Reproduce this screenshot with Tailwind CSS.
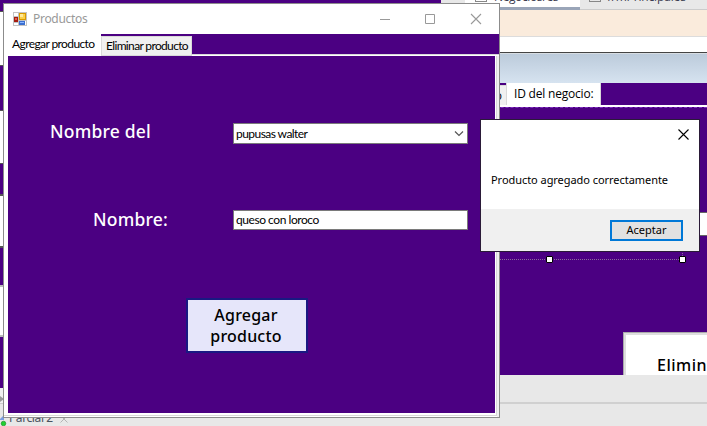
<!DOCTYPE html>
<html lang="es">
<head>
<meta charset="utf-8">
<title>Productos</title>
<script src="https://cdn.jsdelivr.net/npm/@tailwindcss/browser@4"></script>
</head>
<body class="relative h-[426px] w-[707px] overflow-hidden bg-[#e8e8e8] font-['Noto_Sans',sans-serif] text-black">

<!-- Form behind, left edge -->
<div class="absolute left-0 top-0 flex h-[426px] w-[4px] flex-col">
  <div class="h-[11px] bg-[#4b0082]"></div>
  <div class="h-[55px] border-y border-[#555] bg-white"></div>
  <div class="h-[44px] bg-[#4b0082]"></div>
  <div class="h-[54px] border-y border-[#555] bg-white"></div>
  <div class="h-[30px] bg-[#4b0082]"></div>
  <div class="h-[54px] border-y-2 border-[#555] bg-white"></div>
  <div class="h-[37px] bg-[#4b0082]"></div>
  <div class="h-[52px] border-y-2 border-[#bbb] bg-white"></div>
  <div class="h-[51px] bg-[#4b0082]"></div>
  <div class="h-[15px] bg-[#f0f0f0] pt-[8px]"><svg class="block" width="4" height="6"><path d="M0 0L4 3L0 6z" fill="#999"/></svg></div>
  <div class="flex-1 border-t border-[#ccc] bg-[#e8e8e8]"></div>
</div>
<div class="absolute left-0 top-0 h-[4px] w-[442px] bg-[#4b0082]"></div>

<!-- Editor area -->
<div class="absolute left-[441px] top-0 flex h-[375px] w-[266px] flex-col bg-[#4b0082]">
  <div class="flex h-[10px] shrink-0 bg-[#e8e8e8] font-['Open_Sans',sans-serif] text-[12px] leading-[14px] text-[#3c3c50]">
    <div class="w-[24px] shrink-0"></div>
    <div class="flex w-[115px] shrink-0 overflow-hidden border-b-3 border-[#9aa5b8] bg-white pl-[10px]">
      <span class="h-[2px] w-[12px] border border-t-0 border-[#888]"></span>
      <span class="-mt-[10px] ml-[7px] tracking-[-0.4px]">Negociosres</span>
    </div>
    <div class="flex flex-1 overflow-hidden border-b border-[#ccc] pl-[9px]">
      <span class="h-[2px] w-[12px] shrink-0 border border-t-0 border-[#888]"></span>
      <span class="-mt-[10px] ml-[6px] whitespace-nowrap tracking-[-0.15px]">frmPrincipales</span>
    </div>
  </div>
  <div class="h-[27px] shrink-0 border-b border-[#dcdcdc] bg-[#faebdc]"></div>
  <div class="h-[16px] shrink-0 border-b border-[#444] bg-white"></div>
  <div class="h-[30px] shrink-0 border-t border-[#d7dde3] bg-linear-to-b from-[#bccbdb] to-[#d6e3f0]"></div>
  <div class="flex h-[24px] shrink-0 items-end border-b-2 border-white font-['Open_Sans',sans-serif] text-[12px]">
    <div class="flex h-[20px] w-[65px] items-center justify-end border-t border-[#d9d9d9] bg-[#f0f0f0] pr-[4px]"><span>o</span></div>
    <div class="h-[22px] w-[95px] whitespace-nowrap border-x border-[#d9d9d9] bg-white pl-[7px] leading-[21px] tracking-[-0.2px]">ID del negocio:</div>
  </div>
  <div class="border-t border-dashed border-[#8030c0]"></div>
  <div class="mt-[104px] ml-[258px] h-[24px] shrink-0 border-y border-[#666] bg-white"></div>
  <div class="h-[24px] w-[242px] shrink-0 border-r border-b border-dotted border-[#8a6a9c]"></div>
  <div class="mt-[72px] ml-[182px] h-[43px] shrink-0 overflow-hidden whitespace-nowrap border-t border-l border-[#aaa]">
    <div class="h-full border-t-2 border-l-2 border-[#dedede] bg-white pt-[18px] pl-[31px] font-['Noto_Sans',sans-serif] text-[16px] font-medium leading-[24px] tracking-[0.5px]">Elimin</div>
  </div>
</div>
<div class="absolute left-[546px] top-[256px] size-[7px] rounded-[1px] border border-black bg-white"></div>
<div class="absolute left-[679px] top-[256px] size-[7px] rounded-[1px] border border-black bg-white"></div>

<!-- Lower panels -->
<div class="absolute left-[499px] top-[402px] h-[2px] w-[208px] bg-[#d0d0d0]"></div>
<div class="absolute left-0 top-[411px] flex h-[15px] w-[120px] overflow-hidden text-[12px] leading-[14px] text-[#48525e]">
  <svg class="shrink-0" width="9" height="15" viewBox="0 0 9 15"><path d="M0 8L4 4V9H0z" fill="#7a9de0"/><circle cx="3.5" cy="12.5" r="2.3" fill="#20d030" stroke="#168a20" stroke-width=".6"/></svg>
  <span class="w-[44px] whitespace-nowrap tracking-[-0.4px]">Parcial 2</span>
  <svg class="ml-[7px] mt-[4px]" width="8" height="8" viewBox="0 0 8 8"><path d="M.5.5L7.500 7.500M7.500.5L.5 7.500" stroke="#b4b4b4" fill="none"/></svg>
</div>

<!-- Productos window -->
<div class="absolute left-[3px] top-[3px] flex h-[415px] w-[497px] flex-col border border-[#8c8c8c] bg-white">
  <div class="flex h-[30px] shrink-0 items-center pl-[9px]">
    <svg width="14" height="14" viewBox="0 0 14 14" shape-rendering="crispEdges">
      <rect width="14" height="14" fill="#c3c3c3"/>
      <path d="M1 1H5V4H1zM1 11H5V13H1zM12 9H13V13H12z" fill="#fff"/>
      <rect x="6" y="1" width="7" height="7" fill="#d99a00"/><rect x="7" y="2" width="5" height="5" fill="#fbd04a"/><rect x="7" y="2" width="3" height="3" fill="#ffe99a"/>
      <rect x="1" y="5" width="4" height="5" fill="#a51c10"/><rect x="2" y="6" width="2" height="2" fill="#e0604c"/>
      <rect x="6" y="9" width="6" height="4" fill="#3b6fd0"/><rect x="7" y="10" width="4" height="1" fill="#8ab6ff"/>
    </svg>
    <span class="ml-[6px] text-[12px] leading-[16px] tracking-[-0.3px] text-[#999]">Productos</span>
    <svg class="ml-auto mr-[7px]" width="112" height="12" viewBox="0 0 112 12" fill="none" stroke="#999">
      <path d="M0 6.500H10M45.500 1.500H54.500V10.500H45.500z"/>
      <path d="M91 1L101 11M101 1L91 11" stroke-width="1.100"/>
    </svg>
  </div>
  <div class="flex h-[22px] shrink-0 items-end bg-[#4b0082] font-['Lato',sans-serif] text-[12px]">
    <div class="h-[22px] w-[97px] whitespace-nowrap bg-white pl-[8px] leading-[20px] tracking-[-0.6px]">Agregar producto</div>
    <div class="h-[20px] w-[91px] whitespace-nowrap border border-[#d9d9d9] bg-[#f0f0f0] pl-[4px] leading-[18px] tracking-[-0.65px]">Eliminar producto</div>
    <div class="h-[2px] flex-1 border-t border-[#d9d9d9] bg-white"></div>
  </div>
  <div class="flex min-h-0 flex-1 border-r-2 border-[#f0f0f0]">
    <div class="mb-[1px] flex-1 border-r border-b border-[#d9d9d9] pr-[1px] pb-[2px] pl-[4px]">
      <form class="flex h-full flex-col bg-[#4b0082]">
        <div class="mt-[67px] flex h-[21px] items-center">
          <label class="w-[225px] pl-[42px] text-[17.500px] font-medium leading-[17px] pb-[4px] tracking-[0.2px] text-white">Nombre del</label>
          <div class="flex h-[21px] w-[235px] items-center justify-between border border-[#7a7a7a] bg-white pr-[3px] pl-[2px] font-['Lato',sans-serif] text-[12px] tracking-[-0.55px]">
            <span>pupusas walter</span>
            <svg width="10" height="7" viewBox="0 0 10 7"><path d="M1 1.500L5 5.500L9 1.500" fill="none" stroke="#555" stroke-width="1.200"/></svg>
          </div>
        </div>
        <div class="mt-[66px] flex h-[20px] items-center">
          <label class="w-[225px] pl-[85px] text-[17.500px] font-medium leading-[18px] pb-[2px] tracking-[0.2px] text-white">Nombre:</label>
          <div class="flex h-[20px] w-[235px] items-center border border-[#7a7a7a] bg-white pl-[2px] font-['Lato',sans-serif] text-[12px] tracking-[-0.45px]"><span>queso con loroco</span></div>
        </div>
        <button type="button" class="mt-[68px] ml-[178px] h-[55px] w-[122px] border-2 border-[#191982] bg-[#e6e6fa] pr-[2px] text-[16px] font-medium leading-[21px] tracking-[0.2px]">Agregar<br>producto</button>
      </form>
    </div>
  </div>
</div>

<!-- Message box -->
<div class="absolute left-[480px] top-[119px] flex h-[133px] w-[220px] flex-col border border-[#2a1a38] bg-white text-[11px]">
  <div class="flex h-[29px] items-center justify-end pr-[10px]">
    <svg width="11" height="11" viewBox="0 0 11 11"><path d="M.5.5L10.500 10.500M10.500.5L.5 10.500" stroke="#000" stroke-width="1.100"/></svg>
  </div>
  <p class="h-[60px] whitespace-nowrap pt-[23px] pl-[10px] leading-[16px] tracking-[-0.05px]">Producto agregado correctamente</p>
  <div class="flex flex-1 items-center justify-end bg-[#f0f0f0] pr-[16px]">
    <button type="button" class="h-[21px] w-[73px] border-2 border-[#0078d7] bg-[#e1e1e1] pb-[2px] leading-[15px]">Aceptar</button>
  </div>
</div>
</body>
</html>
